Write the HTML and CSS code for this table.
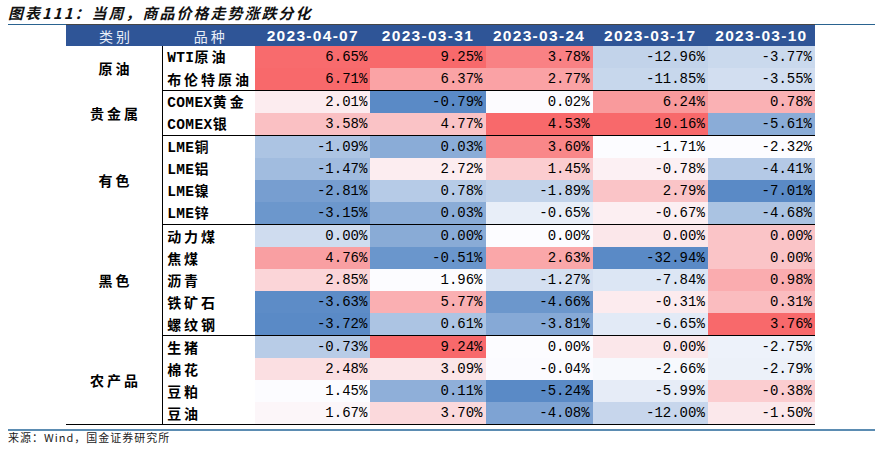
FILE: index.html
```html
<!DOCTYPE html>
<html lang="zh-CN">
<head>
<meta charset="utf-8">
<title>商品价格走势涨跌分化</title>
<link rel="stylesheet" href="styles.css">
</head>
<body>
<div class="page">
  <div class="title">图表111：当周，商品价格走势涨跌分化</div>
  <table class="tbl">
    <colgroup>
      <col class="c-cat"><col class="c-name"><col class="c-w1"><col class="c-w1"><col class="c-w2"><col class="c-w1"><col class="c-w2">
    </colgroup>
    <thead>
      <tr><th class="h-cn">类别</th><th class="h-cn">品种</th><th class="h-date">2023-04-07</th><th class="h-date">2023-03-31</th><th class="h-date">2023-03-24</th><th class="h-date">2023-03-17</th><th class="h-date">2023-03-10</th></tr>
    </thead>
    <tbody>
      <tr><td class="cat" rowspan="2">原油</td><td class="name"><span class="lat">WTI</span>原油</td><td class="num">6.65%</td><td class="num">9.25%</td><td class="num">3.78%</td><td class="num">-12.96%</td><td class="num">-3.77%</td></tr>
      <tr><td class="name">布伦特原油</td><td class="num">6.71%</td><td class="num">6.37%</td><td class="num">2.77%</td><td class="num">-11.85%</td><td class="num">-3.55%</td></tr>
    </tbody>
    <tbody class="grp">
      <tr><td class="cat" rowspan="2">贵金属</td><td class="name"><span class="lat">COMEX</span>黄金</td><td class="num">2.01%</td><td class="num">-0.79%</td><td class="num">0.02%</td><td class="num">6.24%</td><td class="num">0.78%</td></tr>
      <tr><td class="name"><span class="lat">COMEX</span>银</td><td class="num">3.58%</td><td class="num">4.77%</td><td class="num">4.53%</td><td class="num">10.16%</td><td class="num">-5.61%</td></tr>
    </tbody>
    <tbody class="grp">
      <tr><td class="cat" rowspan="4">有色</td><td class="name"><span class="lat">LME</span>铜</td><td class="num">-1.09%</td><td class="num">0.03%</td><td class="num">3.60%</td><td class="num">-1.71%</td><td class="num">-2.32%</td></tr>
      <tr><td class="name"><span class="lat">LME</span>铝</td><td class="num">-1.47%</td><td class="num">2.72%</td><td class="num">1.45%</td><td class="num">-0.78%</td><td class="num">-4.41%</td></tr>
      <tr><td class="name"><span class="lat">LME</span>镍</td><td class="num">-2.81%</td><td class="num">0.78%</td><td class="num">-1.89%</td><td class="num">2.79%</td><td class="num">-7.01%</td></tr>
      <tr><td class="name"><span class="lat">LME</span>锌</td><td class="num">-3.15%</td><td class="num">0.03%</td><td class="num">-0.65%</td><td class="num">-0.67%</td><td class="num">-4.68%</td></tr>
    </tbody>
    <tbody class="grp">
      <tr><td class="cat" rowspan="5">黑色</td><td class="name">动力煤</td><td class="num">0.00%</td><td class="num">0.00%</td><td class="num">0.00%</td><td class="num">0.00%</td><td class="num">0.00%</td></tr>
      <tr><td class="name">焦煤</td><td class="num">4.76%</td><td class="num">-0.51%</td><td class="num">2.63%</td><td class="num">-32.94%</td><td class="num">0.00%</td></tr>
      <tr><td class="name">沥青</td><td class="num">2.85%</td><td class="num">1.96%</td><td class="num">-1.27%</td><td class="num">-7.84%</td><td class="num">0.98%</td></tr>
      <tr><td class="name">铁矿石</td><td class="num">-3.63%</td><td class="num">5.77%</td><td class="num">-4.66%</td><td class="num">-0.31%</td><td class="num">0.31%</td></tr>
      <tr><td class="name">螺纹钢</td><td class="num">-3.72%</td><td class="num">0.61%</td><td class="num">-3.81%</td><td class="num">-6.65%</td><td class="num">3.76%</td></tr>
    </tbody>
    <tbody class="grp">
      <tr><td class="cat" rowspan="4">农产品</td><td class="name">生猪</td><td class="num">-0.73%</td><td class="num">9.24%</td><td class="num">0.00%</td><td class="num">0.00%</td><td class="num">-2.75%</td></tr>
      <tr><td class="name">棉花</td><td class="num">2.48%</td><td class="num">3.09%</td><td class="num">-0.04%</td><td class="num">-2.66%</td><td class="num">-2.79%</td></tr>
      <tr><td class="name">豆粕</td><td class="num">1.45%</td><td class="num">0.11%</td><td class="num">-5.24%</td><td class="num">-5.99%</td><td class="num">-0.38%</td></tr>
      <tr><td class="name">豆油</td><td class="num">1.67%</td><td class="num">3.70%</td><td class="num">-4.08%</td><td class="num">-12.00%</td><td class="num">-1.50%</td></tr>
    </tbody>
  </table>
  <div class="foot-line"></div>
  <div class="source">来源：Wind，国金证券研究所</div>
</div>
<script src="script.js"></script>
</body>
</html>
```

FILE: styles.css
```css
* { box-sizing: border-box; }
html, body { margin: 0; padding: 0; background: #fff; }
body { font-family: "Noto Sans CJK SC", sans-serif; color: #000; }

.page {
  margin-left: 8px;
  width: 867px;
}

.title {
  height: 25px;
  line-height: 25px;
  border-bottom: 1px solid #2a6390;
  font-size: 15px;
  font-weight: 700;
  font-style: italic;
  letter-spacing: 2px;
  color: #111;
  white-space: nowrap;
}

.tbl {
  margin-top: -1px;
  margin-left: 58px;
  width: 749px;
  table-layout: fixed;
  border-collapse: separate;
  border-spacing: 0;
  border-top: 1px solid #454545;
  border-bottom: 1px solid #000;
}

.c-cat { width: 97px; }
.c-name { width: 92px; }
.c-w1 { width: 115px; }
.c-w2 { width: 107px; }

.tbl th,
.tbl td {
  box-sizing: content-box;
}

.tbl th {
  height: 21px;
  padding: 0;
  background: #2f5597;
  color: #fff;
  text-align: center;
  vertical-align: middle;
  white-space: nowrap;
}

.h-cn {
  font-weight: 400;
  font-size: 14px;
  letter-spacing: 3px;
  padding-left: 3px !important;
  color: #e9eef7 !important;
}

.h-date {
  font-family: "Liberation Sans", Arial, sans-serif;
  font-weight: 700;
  font-size: 15.5px;
  letter-spacing: 1.3px;
}

.tbl td {
  height: 22px;
  padding: 0;
  vertical-align: middle;
  white-space: nowrap;
  line-height: 20px;
}

.cat {
  text-align: center;
  font-size: 14px;
  font-weight: 700;
  letter-spacing: 3px;
  padding-left: 3px !important;
  border-right: 1px solid #000;
}

.name {
  padding-left: 4px !important;
  font-size: 14px;
  font-weight: 700;
  letter-spacing: 3px;
}

.lat {
  font-family: "Liberation Mono", monospace;
  font-weight: 700;
  font-size: 14.5px;
  letter-spacing: 0.4px;
}

.num {
  text-align: right;
  padding-right: 3px !important;
  font-family: "Liberation Mono", monospace;
  font-size: 14px;
  color: #000;
}

.grp tr:first-child td:not(.cat) {
  border-top: 1px solid #000;
}

.foot-line {
  margin-top: 4px;
  height: 2px;
  background: #5b8cb2;
}

.source {
  font-size: 11px;
  line-height: 13px;
  letter-spacing: 1px;
  color: #222;
  white-space: nowrap;
}
```

FILE: script.js
```js
(function () {
  var MIN = [90, 138, 198], MID = [252, 252, 255], MAX = [248, 105, 107];
  var rows = document.querySelectorAll('.tbl tbody tr');
  var cols = [];
  rows.forEach(function (tr) {
    tr.querySelectorAll('td.num').forEach(function (td, i) {
      (cols[i] = cols[i] || []).push(td);
    });
  });
  function lerp(a, b, t) {
    return a.map(function (x, k) { return Math.round(x + (b[k] - x) * t); });
  }
  cols.forEach(function (cells) {
    var vals = cells.map(function (td) { return parseFloat(td.textContent); });
    var s = vals.slice().sort(function (a, b) { return a - b; });
    var lo = s[0], hi = s[s.length - 1];
    var pos = (s.length - 1) * 0.5, f = Math.floor(pos);
    var mid = s[f] + (s[Math.min(f + 1, s.length - 1)] - s[f]) * (pos - f);
    cells.forEach(function (td, i) {
      var v = vals[i], c;
      if (v <= mid) {
        c = lerp(MIN, MID, mid === lo ? 1 : (v - lo) / (mid - lo));
      } else {
        c = lerp(MID, MAX, hi === mid ? 1 : (v - mid) / (hi - mid));
      }
      td.style.backgroundColor = 'rgb(' + c.join(',') + ')';
    });
  });
})();
```
